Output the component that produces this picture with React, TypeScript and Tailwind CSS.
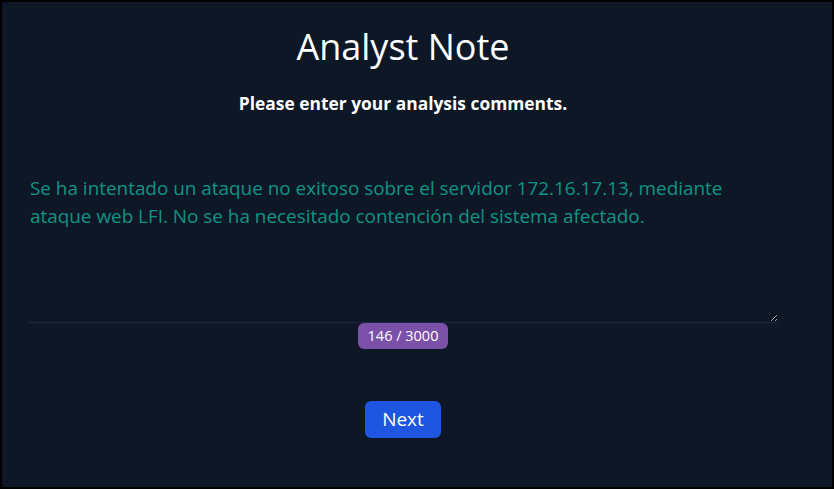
export default function App() {
  const note =
    "Se ha intentado un ataque no exitoso sobre el servidor 172.16.17.13, mediante ataque web LFI. No se ha necesitado contención del sistema afectado.";

  return (
    <div
      className="w-[834px] h-[489px] border-2 border-black bg-[#0e1726] text-white"
      style={{ fontFamily: '"Open Sans", "Noto Sans", sans-serif' }}
    >
      <div className="ml-[26px] w-[750px] flex flex-col items-center">
        <h1 className="mt-[25px] text-[36px] leading-[40px] font-medium">Analyst Note</h1>
        <p className="mt-[24px] text-[17.4px] leading-[24px] font-bold">
          Please enter your analysis comments.
        </p>

        <textarea
          className="mt-[45px] w-full h-[163px] bg-transparent border-0 border-b border-[#1c2640] outline-none pl-[2px] pt-[14px] text-[18.9px] leading-[28px] text-[#0f9484]"
          defaultValue={note}
          maxLength={3000}
        />
        <div className="h-[26px] px-[10px] flex items-center rounded-md bg-[#7a50a9] text-[14.5px] text-white">
          146 / 3000
        </div>

        <button className="mt-[52px] w-[76px] h-[37px] rounded-md bg-[#1e55e1] text-[19px] text-white">
          Next
        </button>
      </div>
    </div>
  );
}
